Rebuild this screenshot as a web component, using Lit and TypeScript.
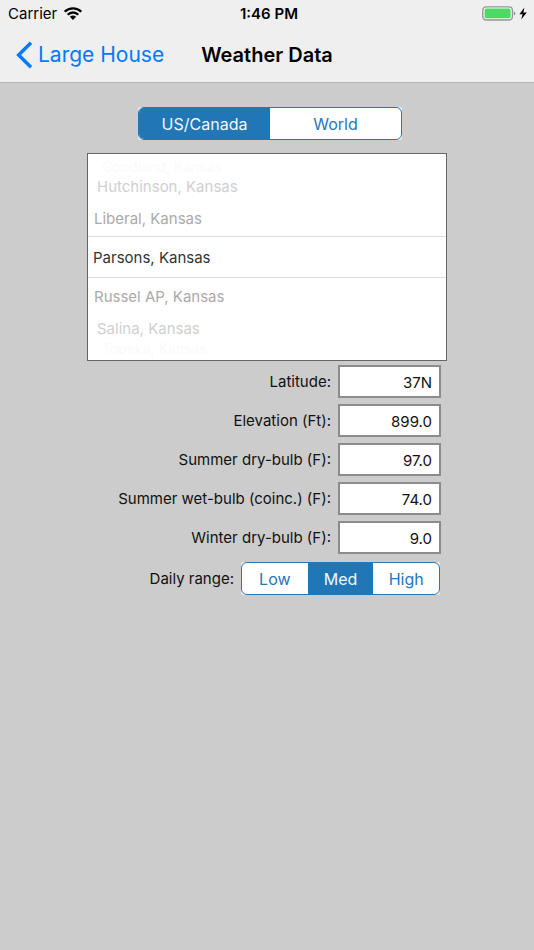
import { LitElement, html, css, svg } from "lit";
import { customElement, property, state } from "lit/decorators.js";
import { classMap } from "lit/directives/class-map.js";

@customElement("segmented-control")
class SegmentedControl extends LitElement {
  @property() label = "";
  @property({ type: Array }) options: string[] = [];
  @property() value = "";

  static styles = css`
    :host {
      display: block;
      background: #eee;
      border-radius: 2px;
    }
    .group {
      display: flex;
      box-sizing: border-box;
      height: 33px;
      border: 1px solid #2478b8;
      border-radius: 6px;
      background: #fff;
      overflow: hidden;
    }
    .segment {
      position: relative;
      flex: 1;
      display: flex;
      align-items: center;
      justify-content: center;
      color: #2478b8;
      font-size: 16px;
      cursor: pointer;
    }
    .segment.on {
      background: #2176b6;
      color: #f1f7fc;
    }
    .radio {
      position: absolute;
      inset: 0;
      margin: 0;
      opacity: 0;
      cursor: pointer;
    }
  `;

  render() {
    return html`<div class="group" role="radiogroup" aria-label=${this.label}>
      ${this.options.map(
        (o) => html`<label class=${classMap({ segment: true, on: o === this.value })}>
          <input
            class="radio"
            type="radio"
            name="segment"
            .checked=${o === this.value}
            @change=${() => (this.value = o)}
          />${o}
        </label>`
      )}
    </div>`;
  }
}

@customElement("wheel-picker")
class WheelPicker extends LitElement {
  @property({ type: Array }) items: string[] = [];
  @state() selected = 3;

  static styles = css`
    :host {
      display: block;
      box-sizing: border-box;
      padding: 6px 0;
      border: 1px solid #666;
      background: #fff;
    }
    .row {
      position: relative;
      display: flex;
      align-items: center;
      box-sizing: border-box;
      cursor: pointer;
    }
    .d0 {
      height: 42px;
      padding-left: 5px;
      border-top: 1px solid #dcdcdc;
      border-bottom: 1px solid #dcdcdc;
      color: #333;
      font-size: 15px;
    }
    .d1 {
      height: 36px;
      padding-left: 6px;
      color: #aaa;
      font-size: 15px;
    }
    .d2 {
      height: 28px;
      padding-left: 9px;
      color: #d0d0d0;
      font-size: 15px;
    }
    .d3 {
      height: 12px;
      padding-left: 14px;
      color: #fafafa;
      font-size: 14px;
    }
    .radio {
      position: absolute;
      inset: 0;
      margin: 0;
      opacity: 0;
      cursor: pointer;
    }
  `;

  render() {
    return html`<div role="radiogroup" aria-label="City">
      ${this.items.map((name, i) => {
        const d = Math.min(3, Math.abs(i - this.selected));
        return html`<label class="row d${d}">
          <input
            class="radio"
            type="radio"
            name="city"
            .checked=${d === 0}
            @change=${() => (this.selected = i)}
          />${name}
        </label>`;
      })}
    </div>`;
  }
}

const wifi = svg`<svg class="wifi" viewBox="0 0 18 13" width="18" height="13" aria-hidden="true">
  <g fill="none" stroke="#000" stroke-width="2.3">
    <path d="M0.8 4.7A11.6 11.6 0 0 1 17.2 4.7" />
    <path d="M3.7 7.7A7.5 7.5 0 0 1 14.3 7.7" />
  </g>
  <path d="M5.9 9.7A4.4 4.4 0 0 1 12.1 9.7L9 12.9Z" />
</svg>`;

const battery = svg`<svg viewBox="0 0 46 15" width="46" height="15" aria-hidden="true">
  <rect x="0.8" y="0.8" width="29.6" height="13.2" rx="3.4" fill="#f6f6f6" stroke="#959595" stroke-width="1.3" />
  <rect x="2.6" y="2.6" width="26" height="9.6" rx="1.6" fill="#4cd964" />
  <path d="M31.8 5.2Q33.4 5.7 33.4 7.4T31.8 9.6Z" fill="#959595" />
  <path d="M42.4 1.4L37.4 8.2H40.6L39.2 13.6L44.8 6.4H41.4Z" />
</svg>`;

const chevron = svg`<svg viewBox="0 0 17 28" width="17" height="28" aria-hidden="true">
  <path d="M15 1.8L2.6 14L15 26.2" fill="none" stroke="#007aff" stroke-width="3.4" />
</svg>`;

@customElement("app-root")
class AppRoot extends LitElement {
  private fields = [
    { id: "latitude", label: "Latitude:", value: "37N" },
    { id: "elevation", label: "Elevation (Ft):", value: "899.0" },
    { id: "summer-dry", label: "Summer dry-bulb (F):", value: "97.0" },
    { id: "summer-wet", label: "Summer wet-bulb (coinc.) (F):", value: "74.0" },
    { id: "winter-dry", label: "Winter dry-bulb (F):", value: "9.0" },
  ];

  private cities = [
    "Goodland, Kansas",
    "Hutchinson, Kansas",
    "Liberal, Kansas",
    "Parsons, Kansas",
    "Russel AP, Kansas",
    "Salina, Kansas",
    "Topeka, Kansas",
  ];

  static styles = css`
    :host {
      display: block;
      min-height: 100vh;
      background: #ccc;
      color: #111;
      font-family: Inter, "Liberation Sans", sans-serif;
      font-size: 15px;
    }
    .header {
      background: #efefef;
      border-bottom: 1px solid #b4b4b4;
      color: #000;
    }
    .bar {
      display: grid;
      grid-template-columns: 1fr auto 1fr;
      align-items: center;
    }
    .status {
      height: 27px;
      padding: 0 6px 0 8px;
    }
    .nav {
      height: 55px;
      padding: 0 16px;
    }
    .carrier {
      display: flex;
      align-items: center;
      gap: 7px;
    }
    .time {
      font-weight: 600;
      padding-left: 2px;
    }
    .power {
      display: flex;
      justify-content: flex-end;
    }
    .back {
      display: flex;
      align-items: center;
      gap: 5px;
      color: #007aff;
      font-size: 21px;
      text-decoration: none;
      white-space: nowrap;
    }
    .title {
      margin: 0;
      font-size: 20px;
      font-weight: 600;
      white-space: nowrap;
    }
    .form {
      max-width: 360px;
      margin: 0 auto;
      padding: 24px 0;
    }
    .region {
      margin: 0 45px 13px 51px;
    }
    .fields {
      display: flex;
      flex-direction: column;
      gap: 6px;
      padding: 4px 6px 8px 0;
    }
    .field,
    .range {
      display: flex;
      align-items: center;
      justify-content: flex-end;
      gap: 7px;
    }
    .range {
      padding-right: 7px;
    }
    .input {
      box-sizing: border-box;
      width: 103px;
      height: 33px;
      padding: 2px 7px 0 6px;
      border: 2px solid #8c8c8c;
      border-radius: 0;
      background: #fff;
      color: #111;
      font: inherit;
      text-align: right;
    }
    .levels {
      flex: 0 0 199px;
    }
  `;

  render() {
    return html`
      <header class="header">
        <div class="bar status">
          <span class="carrier">Carrier ${wifi}</span>
          <span class="time">1:46 PM</span>
          <span class="power">${battery}</span>
        </div>
        <nav class="bar nav">
          <a class="back" href="#">${chevron}<span>Large House</span></a>
          <h1 class="title">Weather Data</h1>
        </nav>
      </header>
      <main class="form">
        <segmented-control
          class="region"
          label="Region"
          .options=${["US/Canada", "World"]}
          value="US/Canada"
        ></segmented-control>
        <wheel-picker .items=${this.cities}></wheel-picker>
        <div class="fields">
          ${this.fields.map(
            (f) => html`<div class="field">
              <label for=${f.id}>${f.label}</label>
              <input class="input" id=${f.id} type="text" .value=${f.value} />
            </div>`
          )}
        </div>
        <div class="range">
          <span>Daily range:</span>
          <segmented-control
            class="levels"
            label="Daily range"
            .options=${["Low", "Med", "High"]}
            value="Med"
          ></segmented-control>
        </div>
      </main>
    `;
  }
}
